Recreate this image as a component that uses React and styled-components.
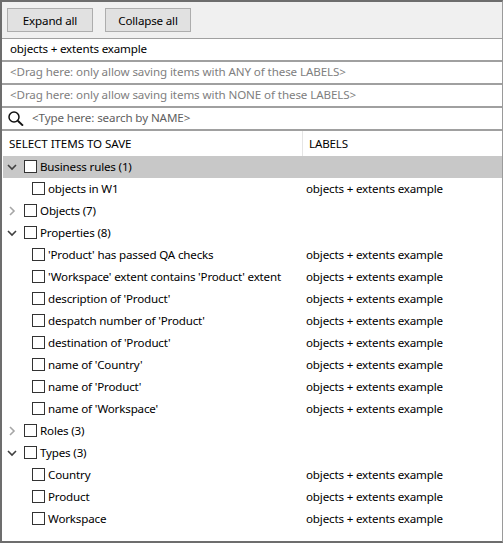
import React from "react";
import styled, { createGlobalStyle } from "styled-components";

const groups = [
    { name: "Business rules (1)", open: true, selected: true, items: ["objects in W1"] },
    { name: "Objects (7)", open: false, items: [] },
    {
        name: "Properties (8)",
        open: true,
        items: [
            "'Product' has passed QA checks",
            "'Workspace' extent contains 'Product' extent",
            "description of 'Product'",
            "despatch number of 'Product'",
            "destination of 'Product'",
            "name of 'Country'",
            "name of 'Product'",
            "name of 'Workspace'",
        ],
    },
    { name: "Roles (3)", open: false, items: [] },
    { name: "Types (3)", open: true, items: ["Country", "Product", "Workspace"] },
];

const LABEL = "objects + extents example";

const App = () => {
    return (
        <>
            <GlobalStyle />
            <Window>
                <Toolbar>
                    <Button>Expand all</Button>
                    <Button>Collapse all</Button>
                </Toolbar>
                <FieldRow>{LABEL}</FieldRow>
                <FieldRow $hint>&lt;Drag here: only allow saving items with ANY of these LABELS&gt;</FieldRow>
                <FieldRow $hint>&lt;Drag here: only allow saving items with NONE of these LABELS&gt;</FieldRow>
                <SearchRow>
                    <SearchIcon viewBox="0 0 16 16">
                        <circle cx="6" cy="7" r="5" fill="none" stroke="#111" strokeWidth="1.5" />
                        <path d="M9.8 10.8L15 15.6" stroke="#111" strokeWidth="1.9" />
                    </SearchIcon>
                    <SearchHint>&lt;Type here: search by NAME&gt;</SearchHint>
                </SearchRow>
                <TableHead>
                    <HeadCell $first>SELECT ITEMS TO SAVE</HeadCell>
                    <HeadCell>LABELS</HeadCell>
                </TableHead>
                <Tree>
                    {groups.map((group) => (
                        <React.Fragment key={group.name}>
                            <GroupRow $selected={group.selected}>
                                <Chevron viewBox="0 0 10 10" $open={group.open}>
                                    <path d={group.open ? "M1 3l4 4 4-4" : "M3 1l4 4-4 4"} />
                                </Chevron>
                                <Check />
                                <GroupName>{group.name}</GroupName>
                            </GroupRow>
                            {group.items.map((item) => (
                                <ItemRow key={item}>
                                    <ItemName>
                                        <Check />
                                        <span>{item}</span>
                                    </ItemName>
                                    <span>{LABEL}</span>
                                </ItemRow>
                            ))}
                        </React.Fragment>
                    ))}
                </Tree>
            </Window>
        </>
    );
};

const GlobalStyle = createGlobalStyle`
    html, body {
        margin: 0;
        padding: 0;
        background: #ffffff;
    }
    * {
        box-sizing: border-box;
    }
`;

// 전체 창
const Window = styled.div`
    width: 503px;
    height: 543px;
    overflow: hidden;
    display: flex;
    flex-direction: column;
    background: #ffffff;
    border-top: 2px solid #6d6d6d;
    border-left: 2px solid #6d6d6d;
    border-bottom: 2px solid #6d6d6d;
    border-right: 1px solid #9a9a9a;
    font-family: "Noto Sans", sans-serif;
    font-size: 11.6px;
    letter-spacing: -0.17px;
    color: #000000;
`;

const Toolbar = styled.div`
    height: 37px;
    flex: none;
    display: flex;
    align-items: flex-start;
    gap: 12px;
    padding: 6px 0 0 5px;
    background: #f0f0f0;
    border-bottom: 1px solid #a0a0a0;
`;

const Button = styled.button`
    width: 86px;
    height: 24px;
    padding: 0;
    background: #e1e1e1;
    border: 1px solid #adadad;
    font: inherit;
    letter-spacing: inherit;
    color: #000000;
`;

// 입력 줄
const FieldRow = styled.div`
    height: 23px;
    flex: none;
    display: flex;
    align-items: center;
    padding: 0 0 3px 8px;
    background: #ffffff;
    border-bottom: 2px solid #a0a0a0;
    letter-spacing: ${(props) => (props.$hint ? "-0.1px" : "inherit")};
    color: ${(props) => (props.$hint ? "#808080" : "#000000")};
`;

const SearchRow = styled(FieldRow)`
    gap: 8px;
    padding-left: 6px;
    letter-spacing: -0.1px;
`;

const SearchIcon = styled.svg`
    width: 16px;
    height: 16px;
    flex: none;
    margin-top: 2px;
`;

const SearchHint = styled.span`
    color: #606060;
`;

const TableHead = styled.div`
    height: 25px;
    flex: none;
    display: grid;
    grid-template-columns: 301px 1fr;
    align-items: stretch;
`;

const HeadCell = styled.div`
    display: flex;
    align-items: center;
    padding-left: ${(props) => (props.$first ? "7px" : "6px")};
    letter-spacing: ${(props) => (props.$first ? "-0.07px" : "inherit")};
    border-right: ${(props) => (props.$first ? "1px solid #e5e5e5" : "none")};
`;

const Tree = styled.div`
    flex: 1;
    padding-left: 1px;
`;

const GroupRow = styled.div`
    height: 22px;
    display: flex;
    align-items: center;
    padding: 0 0 1px 4px;
    background: ${(props) => (props.$selected ? "#c8c8c8" : "transparent")};
`;

const GroupName = styled.span`
    margin-left: 3px;
`;

const Chevron = styled.svg`
    width: 10px;
    height: 10px;
    flex: none;
    margin-right: 7px;

    path {
        fill: none;
        stroke: ${(props) => (props.$open ? "#404040" : "#a6a6a6")};
        stroke-width: 1.6;
    }
`;

const Check = styled.div`
    width: 13px;
    height: 13px;
    flex: none;
    background: #ffffff;
    border: 1px solid #333333;
`;

const ItemRow = styled.div`
    height: 22px;
    display: grid;
    grid-template-columns: 274px 1fr;
    align-items: center;
    padding: 0 0 1px 29px;
`;

const ItemName = styled.div`
    display: flex;
    align-items: center;
    gap: 3px;
    white-space: nowrap;
`;

export default App;
